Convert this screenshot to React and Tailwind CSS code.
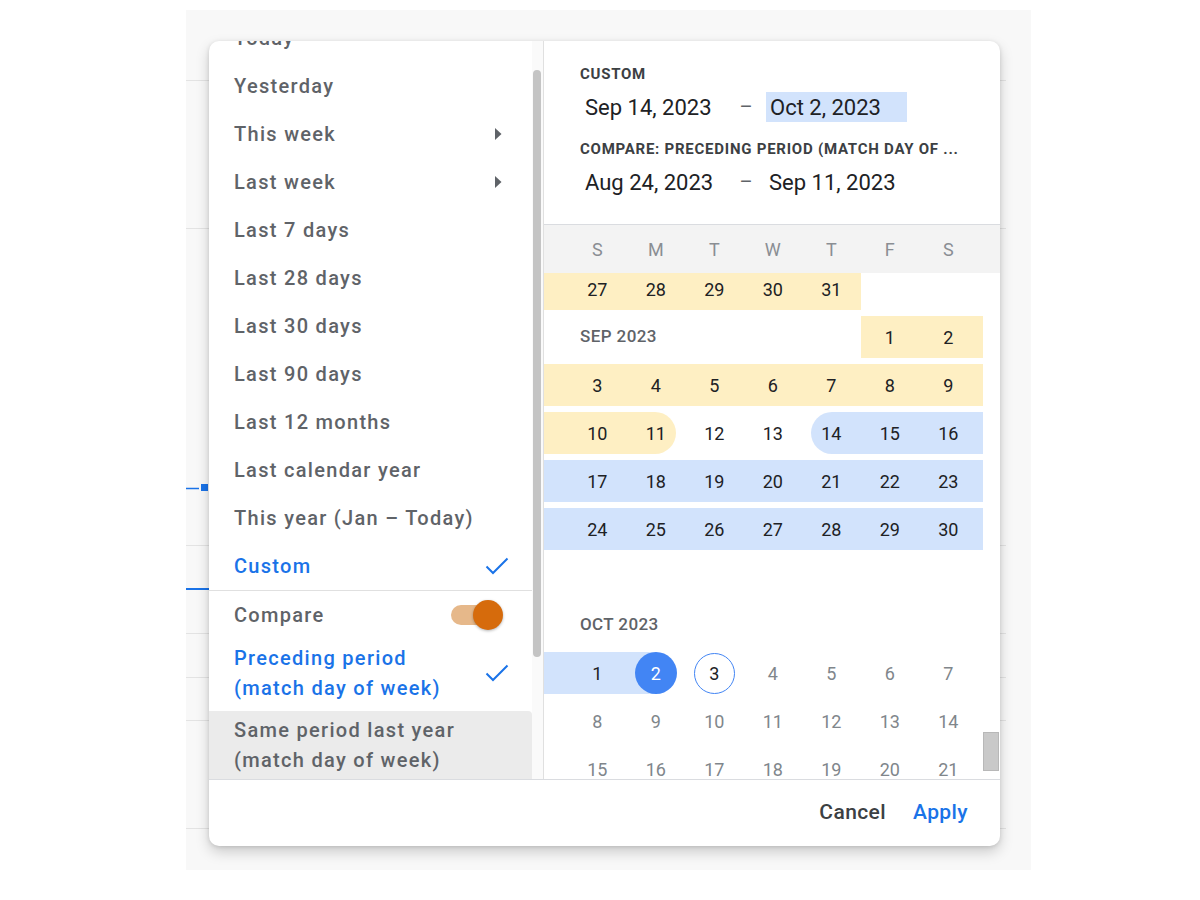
import React from 'react';

const PRESETS = [
  { label: 'Today' },
  { label: 'Yesterday' },
  { label: 'This week', arrow: true },
  { label: 'Last week', arrow: true },
  { label: 'Last 7 days' },
  { label: 'Last 28 days' },
  { label: 'Last 30 days' },
  { label: 'Last 90 days' },
  { label: 'Last 12 months' },
  { label: 'Last calendar year' },
  { label: 'This year (Jan – Today)' },
  { label: 'Custom', active: true },
];

const WEEKDAYS = ['S', 'M', 'T', 'W', 'T', 'F', 'S'];

// kind: y = compare range, b = selected range, yEnd / bStart = rounded ends,
// sel = range end (filled), today = outlined, off = disabled (future)
const ROWS = [
  { lead: 'y', cells: [['27', 'y'], ['28', 'y'], ['29', 'y'], ['30', 'y'], ['31', 'y'], null, null] },
  { label: 'SEP 2023', trail: 'y', cells: [['1', 'y'], ['2', 'y']] },
  { lead: 'y', trail: 'y', cells: ['3', '4', '5', '6', '7', '8', '9'].map((d) => [d, 'y']) },
  {
    lead: 'y',
    trail: 'b',
    cells: [['10', 'y'], ['11', 'yEnd'], ['12'], ['13'], ['14', 'bStart'], ['15', 'b'], ['16', 'b']],
  },
  { lead: 'b', trail: 'b', cells: ['17', '18', '19', '20', '21', '22', '23'].map((d) => [d, 'b']) },
  { lead: 'b', trail: 'b', cells: ['24', '25', '26', '27', '28', '29', '30'].map((d) => [d, 'b']) },
  { empty: true },
  { month: 'OCT 2023' },
  {
    lead: 'b',
    cells: [['1', 'b'], ['2', 'sel'], ['3', 'today'], ['4', 'off'], ['5', 'off'], ['6', 'off'], ['7', 'off']],
  },
  { cells: ['8', '9', '10', '11', '12', '13', '14'].map((d) => [d, 'off']) },
  { cells: ['15', '16', '17', '18', '19', '20', '21'].map((d) => [d, 'off']) },
];

const BAND = { y: 'bg-[#feefc3]', b: 'bg-[#d2e3fc]' };

function Check() {
  return (
    <svg width="24" height="18" viewBox="0 0 24 18" fill="none">
      <path d="M1.5 9.5 L8 16 L22.5 1.5" stroke="#1a73e8" strokeWidth="2" />
    </svg>
  );
}

function Arrow() {
  return (
    <svg width="7" height="12" viewBox="0 0 7 12">
      <polygon points="0,0 6.5,6 0,12" fill="#5f6368" />
    </svg>
  );
}

function DayCell({ cell }) {
  if (!cell) return <div className="w-[58.5px] h-[48px] shrink-0" />;
  const [d, kind] = cell;
  const num = 'w-[58.5px] shrink-0 text-center';
  if (kind === 'y' || kind === 'b') {
    return (
      <div className="w-[58.5px] h-[48px] shrink-0 flex items-center">
        <div className={`w-full h-[42px] flex items-center justify-center ${BAND[kind]}`}>{d}</div>
      </div>
    );
  }
  if (kind === 'yEnd') {
    return (
      <div className="w-[58.5px] h-[48px] shrink-0 flex items-center">
        <div className="w-[49px] h-[42px] rounded-r-[21px] bg-[#feefc3] flex items-center">
          <span className={num}>{d}</span>
        </div>
      </div>
    );
  }
  if (kind === 'bStart') {
    return (
      <div className="w-[58.5px] h-[48px] shrink-0 flex items-center justify-end">
        <div className="w-[50px] h-[42px] rounded-l-[21px] bg-[#d2e3fc] flex items-center">
          <span className={`${num} -ml-[8.5px]`}>{d}</span>
        </div>
      </div>
    );
  }
  if (kind === 'sel') {
    return (
      <div className="w-[58.5px] h-[48px] shrink-0 flex items-center">
        <div className="w-[29.25px] h-[42px] bg-[#d2e3fc]" />
        <div className="-ml-[21px] w-[42px] h-[42px] rounded-full bg-[#4285f4] text-white flex items-center justify-center">
          {d}
        </div>
      </div>
    );
  }
  if (kind === 'today') {
    return (
      <div className="w-[58.5px] h-[48px] shrink-0 flex items-center justify-center">
        <div className="w-[41px] h-[41px] rounded-full border-[1.5px] border-[#4285f4] flex items-center justify-center">
          {d}
        </div>
      </div>
    );
  }
  return (
    <div
      className={`w-[58.5px] h-[48px] shrink-0 flex items-center justify-center ${
        kind === 'off' ? 'text-[#80868b]' : ''
      }`}
    >
      {d}
    </div>
  );
}

function CalendarRow({ row }) {
  if (row.empty) return <div className="h-[48px]" />;
  if (row.month) {
    return (
      <div className="h-[48px] flex items-center pl-[36px] text-[17px] font-medium text-[#5f6368] tracking-[0.4px]">
        {row.month}
      </div>
    );
  }
  return (
    <div className="h-[48px] flex items-center">
      {row.label ? (
        <div className="w-[316.5px] shrink-0 pl-[36px] text-[17px] font-medium text-[#5f6368] tracking-[0.4px]">
          {row.label}
        </div>
      ) : (
        <div className={`w-[24px] h-[42px] shrink-0 ${row.lead ? BAND[row.lead] : ''}`} />
      )}
      {row.cells.map((c, i) => (
        <DayCell key={i} cell={c} />
      ))}
      <div className={`w-[5px] h-[42px] shrink-0 ${row.trail ? BAND[row.trail] : ''}`} />
    </div>
  );
}

function Backdrop() {
  const lines = [70, 218, 535, 623, 667, 710, 818];
  return (
    <svg width="845" height="860" className="block">
      {lines.map((y) => (
        <line key={y} x1="0" x2="820" y1={y + 0.5} y2={y + 0.5} stroke="#e3e3e3" strokeWidth="1" />
      ))}
      <line x1="0" x2="13" y1="478.5" y2="478.5" stroke="#1a73e8" strokeWidth="1.5" />
      <rect x="15" y="474" width="7" height="7" fill="#1a73e8" />
      <line x1="0" x2="23" y1="579" y2="579" stroke="#1a73e8" strokeWidth="2" />
    </svg>
  );
}

export default function App() {
  return (
    <div className="w-[1200px] h-[900px] bg-white pt-[10px] pl-[186px] font-['Roboto',sans-serif]">
      <div className="relative w-[845px] h-[860px] bg-[#f8f8f8]">
        <Backdrop />

        {/* Date range dialog */}
        <div className="absolute left-[23px] top-[31px] w-[791px] h-[805px] bg-white rounded-[10px] overflow-hidden flex flex-col shadow-[0_6px_14px_rgba(0,0,0,0.18),0_1px_4px_rgba(0,0,0,0.12)]">
          <div className="flex flex-1 min-h-0">
            {/* Presets */}
            <div className="w-[335px] shrink-0 flex border-r border-[#e0e0e0]">
              <div className="flex-1 overflow-hidden">
                <div className="-mt-[27px]">
                  {PRESETS.map((p) => (
                    <div
                      key={p.label}
                      className={`h-[48px] flex items-center justify-between pl-[25px] pr-[23px] text-[20px] font-medium tracking-[1.3px] ${
                        p.active ? 'text-[#1a73e8]' : 'text-[#5f6368]'
                      }`}
                    >
                      <span>{p.label}</span>
                      {p.arrow && (
                        <span className="pr-[7px] flex">
                          <Arrow />
                        </span>
                      )}
                      {p.active && <Check />}
                    </div>
                  ))}
                  <div className="border-t border-[#e0e0e0] h-[49px] flex items-center justify-between pl-[25px] pr-[29px] text-[20px] font-medium tracking-[1.3px] text-[#5f6368]">
                    <span>Compare</span>
                    <div className="flex items-center">
                      <div className="w-[46px] h-[20px] rounded-full bg-[#e6b88a]" />
                      <div className="-ml-[24px] w-[30px] h-[30px] rounded-full bg-[#d66b0c] shadow-[0_1px_3px_rgba(0,0,0,0.3)]" />
                    </div>
                  </div>
                  <div className="pt-[4px] pb-[8px] flex items-center justify-between pl-[25px] pr-[23px] text-[20px] leading-[30px] font-medium tracking-[1.3px] text-[#1a73e8]">
                    <span>
                      Preceding period
                      <br />
                      (match day of week)
                    </span>
                    <Check />
                  </div>
                  <div className="pt-[4px] pb-[8px] pl-[25px] pr-[23px] bg-[#ebebeb] rounded-r-[4px] text-[20px] leading-[30px] font-medium tracking-[1.3px] text-[#5f6368]">
                    Same period last year
                    <br />
                    (match day of week)
                  </div>
                </div>
              </div>
              <div className="w-[11px] shrink-0 bg-[#fafafa]">
                <div className="mt-[29px] ml-[1px] w-[8px] h-[587px] rounded-full bg-[#c4c4c4]" />
              </div>
            </div>

            {/* Range + calendar */}
            <div className="flex-1 min-w-0 flex flex-col">
              <div className="h-[184px] shrink-0 border-b border-[#dadce0] pt-[23px] pl-[36px] text-[#202124]">
                <div className="h-[20px] flex items-center text-[15px] font-bold text-[#3c4043] tracking-[0.75px]">
                  CUSTOM
                </div>
                <div className="mt-[8px] h-[30px] flex items-center text-[22px]">
                  <div className="w-[146px] pl-[5px]">Sep 14, 2023</div>
                  <div className="w-[40px] text-center text-[#5f6368] text-[20px]">–</div>
                  <div className="w-[141px] h-[30px] pl-[4px] bg-[#d2e3fc] flex items-center">Oct 2, 2023</div>
                </div>
                <div className="mt-[17px] h-[20px] flex items-center text-[15px] font-bold text-[#3c4043] tracking-[0.75px] whitespace-nowrap">
                  COMPARE: PRECEDING PERIOD (MATCH DAY OF ...
                </div>
                <div className="mt-[8px] h-[30px] flex items-center text-[22px]">
                  <div className="w-[146px] pl-[5px]">Aug 24, 2023</div>
                  <div className="w-[40px] text-center text-[#5f6368] text-[20px]">–</div>
                  <div className="w-[141px] pl-[3px]">Sep 11, 2023</div>
                </div>
              </div>

              <div className="h-[48px] shrink-0 bg-[#f3f3f3] flex items-center text-[18px] text-[#8a8e93]">
                <div className="w-[24px] shrink-0" />
                {WEEKDAYS.map((w, i) => (
                  <div key={i} className="w-[58.5px] shrink-0 text-center">
                    {w}
                  </div>
                ))}
              </div>

              <div className="flex-1 min-h-0 flex">
                <div className="w-[438.5px] shrink-0 overflow-hidden text-[18px] text-[#202124]">
                  <div className="-mt-[8px]">
                    {ROWS.map((r, i) => (
                      <CalendarRow key={i} row={r} />
                    ))}
                  </div>
                </div>
                <div className="flex-1 bg-white">
                  <div className="mt-[459px] w-[16px] h-[39px] bg-[#c9c9c9] border border-[#b8b8b8]" />
                </div>
              </div>
            </div>
          </div>

          {/* Footer */}
          <div className="h-[67px] shrink-0 border-t border-[#dadce0] flex items-center justify-end gap-[27px] pr-[32px] text-[21px] font-medium tracking-[0.4px]">
            <span className="text-[#3c4043]">Cancel</span>
            <span className="text-[#1a73e8]">Apply</span>
          </div>
        </div>
      </div>
    </div>
  );
}
